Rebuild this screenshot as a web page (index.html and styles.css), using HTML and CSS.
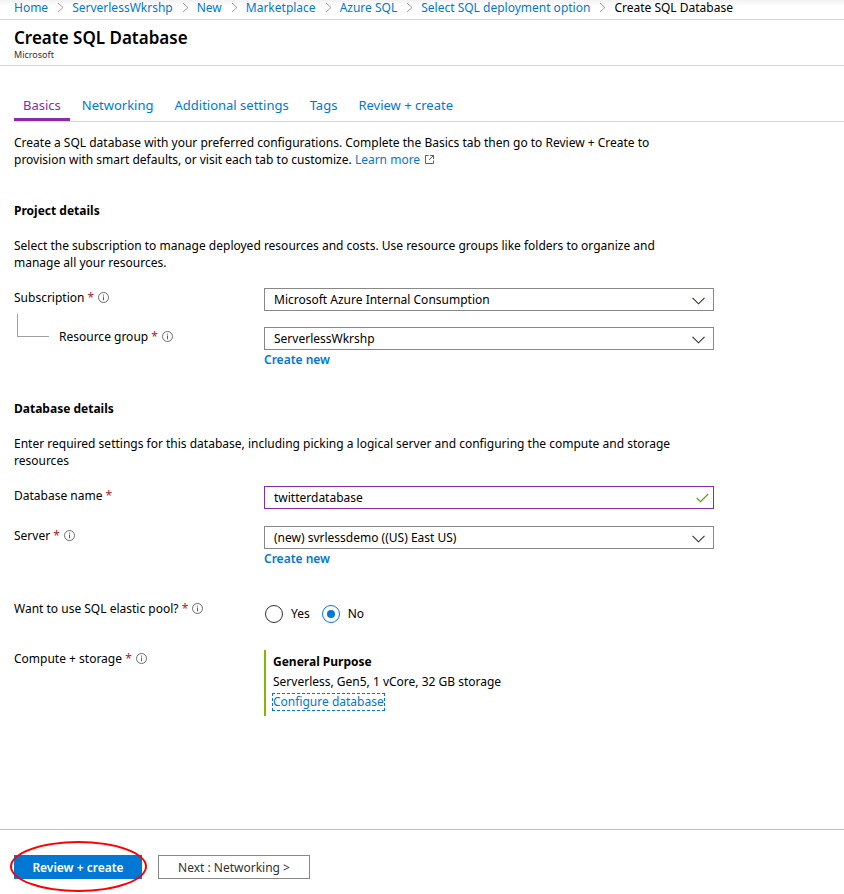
FILE: index.html
```html
<!DOCTYPE html>
<html>
<head>
<meta charset="utf-8">
<link rel="stylesheet" href="styles.css">
</head>
<body>
<div class="page">
  <nav class="crumbs">
    <a class="crumb">Home</a><span class="sep"><svg width="7" height="11" viewBox="0 0 7 11"><polyline points="1,1 6,5.5 1,10" fill="none" stroke="#a19f9d" stroke-width="1"/></svg></span>
    <a class="crumb">ServerlessWkrshp</a><span class="sep"><svg width="7" height="11" viewBox="0 0 7 11"><polyline points="1,1 6,5.5 1,10" fill="none" stroke="#a19f9d" stroke-width="1"/></svg></span>
    <a class="crumb">New</a><span class="sep"><svg width="7" height="11" viewBox="0 0 7 11"><polyline points="1,1 6,5.5 1,10" fill="none" stroke="#a19f9d" stroke-width="1"/></svg></span>
    <a class="crumb">Marketplace</a><span class="sep"><svg width="7" height="11" viewBox="0 0 7 11"><polyline points="1,1 6,5.5 1,10" fill="none" stroke="#a19f9d" stroke-width="1"/></svg></span>
    <a class="crumb">Azure SQL</a><span class="sep"><svg width="7" height="11" viewBox="0 0 7 11"><polyline points="1,1 6,5.5 1,10" fill="none" stroke="#a19f9d" stroke-width="1"/></svg></span>
    <a class="crumb">Select SQL deployment option</a><span class="sep"><svg width="7" height="11" viewBox="0 0 7 11"><polyline points="1,1 6,5.5 1,10" fill="none" stroke="#a19f9d" stroke-width="1"/></svg></span>
    <span class="crumb current">Create SQL Database</span>
  </nav>

  <header class="title-block">
    <h1 class="title">Create SQL Database</h1>
    <div class="publisher">Microsoft</div>
  </header>

  <div class="content">
    <div class="tabs">
      <div class="tab active">Basics</div>
      <div class="tab">Networking</div>
      <div class="tab">Additional settings</div>
      <div class="tab">Tags</div>
      <div class="tab">Review + create</div>
    </div>

    <p class="intro">Create a SQL database with your preferred configurations. Complete the Basics tab then go to Review + Create to provision with smart defaults, or visit each tab to customize. <a class="link">Learn more<svg class="ext" width="11" height="11" viewBox="0 0 11 11"><path d="M4.5 1.5H1.5v8h8v-3" fill="none" stroke="#605e5c" stroke-width="1"/><path d="M6 1.5h3.5V5M9.5 1.5L5 6" fill="none" stroke="#605e5c" stroke-width="1"/></svg></a></p>

    <h2 class="section">Project details</h2>
    <p class="para">Select the subscription to manage deployed resources and costs. Use resource groups like folders to organize and manage all your resources.</p>

    <div class="row row-subs">
      <div class="label">Subscription <span class="req">*</span> <svg class="info" width="11" height="11" viewBox="0 0 11 11"><circle cx="5.5" cy="5.5" r="5" fill="none" stroke="#605e5c" stroke-width="0.9"/><rect x="5" y="4.5" width="1" height="3.8" fill="#605e5c"/><rect x="5" y="2.6" width="1" height="1" fill="#605e5c"/></svg></div>
      <div class="control">
        <div class="select"><span>Microsoft Azure Internal Consumption</span><svg class="chev" width="13" height="8" viewBox="0 0 13 8"><polyline points="0.5,0.8 6.5,6.8 12.5,0.8" fill="none" stroke="#323130" stroke-width="1.1"/></svg></div>
      </div>
    </div>

    <div class="row row-sub">
      <div class="sublabel"><span class="tree"></span><span class="label">Resource group <span class="req">*</span> <svg class="info" width="11" height="11" viewBox="0 0 11 11"><circle cx="5.5" cy="5.5" r="5" fill="none" stroke="#605e5c" stroke-width="0.9"/><rect x="5" y="4.5" width="1" height="3.8" fill="#605e5c"/><rect x="5" y="2.6" width="1" height="1" fill="#605e5c"/></svg></span></div>
      <div class="control">
        <div class="select"><span>ServerlessWkrshp</span><svg class="chev" width="13" height="8" viewBox="0 0 13 8"><polyline points="0.5,0.8 6.5,6.8 12.5,0.8" fill="none" stroke="#323130" stroke-width="1.1"/></svg></div>
        <a class="create-new">Create new</a>
      </div>
    </div>

    <h2 class="section section-2">Database details</h2>
    <p class="para">Enter required settings for this database, including picking a logical server and configuring the compute and storage resources</p>

    <div class="row row-db">
      <div class="label">Database name <span class="req">*</span></div>
      <div class="control">
        <div class="select input-ok"><span>twitterdatabase</span><svg class="check" width="13" height="10" viewBox="0 0 13 10"><polyline points="0.8,5 4.5,8.7 12.2,1" fill="none" stroke="#57a300" stroke-width="1.1"/></svg></div>
      </div>
    </div>

    <div class="row row-server">
      <div class="label">Server <span class="req">*</span> <svg class="info" width="11" height="11" viewBox="0 0 11 11"><circle cx="5.5" cy="5.5" r="5" fill="none" stroke="#605e5c" stroke-width="0.9"/><rect x="5" y="4.5" width="1" height="3.8" fill="#605e5c"/><rect x="5" y="2.6" width="1" height="1" fill="#605e5c"/></svg></div>
      <div class="control">
        <div class="select"><span>(new) svrlessdemo ((US) East US)</span><svg class="chev" width="13" height="8" viewBox="0 0 13 8"><polyline points="0.5,0.8 6.5,6.8 12.5,0.8" fill="none" stroke="#323130" stroke-width="1.1"/></svg></div>
        <a class="create-new">Create new</a>
      </div>
    </div>

    <div class="row row-pool">
      <div class="label">Want to use SQL elastic pool? <span class="req">*</span> <svg class="info" width="11" height="11" viewBox="0 0 11 11"><circle cx="5.5" cy="5.5" r="5" fill="none" stroke="#605e5c" stroke-width="0.9"/><rect x="5" y="4.5" width="1" height="3.8" fill="#605e5c"/><rect x="5" y="2.6" width="1" height="1" fill="#605e5c"/></svg></div>
      <div class="control radios">
        <span class="radio"><span class="dot"></span>Yes</span>
        <span class="radio on"><span class="dot"></span>No</span>
      </div>
    </div>

    <div class="row row-compute">
      <div class="label">Compute + storage <span class="req">*</span> <svg class="info" width="11" height="11" viewBox="0 0 11 11"><circle cx="5.5" cy="5.5" r="5" fill="none" stroke="#605e5c" stroke-width="0.9"/><rect x="5" y="4.5" width="1" height="3.8" fill="#605e5c"/><rect x="5" y="2.6" width="1" height="1" fill="#605e5c"/></svg></div>
      <div class="control">
        <div class="tier">
          <div class="tier-name">General Purpose</div>
          <div class="tier-desc">Serverless, Gen5, 1 vCore, 32 GB storage</div>
          <div><a class="configure">Configure database</a></div>
        </div>
      </div>
    </div>
  </div>

  <footer class="footer">
    <div class="btn-wrap">
      <button class="btn primary">Review + create</button>
      <span class="annot"></span>
    </div>
    <button class="btn secondary">Next : Networking &gt;</button>
  </footer>
</div>
</body>
</html>
```

FILE: styles.css
```css
html, body {
  margin: 0;
  padding: 0;
  background: #fff;
}
body {
  font-family: "Segoe UI", "Noto Sans", "Open Sans", sans-serif;
  font-size: 12px;
  color: #000;
  width: 844px;
  height: 894px;
  overflow: hidden;
}
.page {
  position: relative;
  height: 894px;
}
a { color: #0078d4; text-decoration: none; }

.crumbs {
  height: 20px;
  box-sizing: border-box;
  border-bottom: 1px solid #d6d6d6;
  padding-left: 14px;
  display: flex;
  align-items: flex-start;
  font-size: 12px;
  line-height: 15px;
  white-space: nowrap;
  background: linear-gradient(#f2f2f2, #fff 6px);
}
.crumb { color: #0078d4; }
.crumb.current { color: #000; }
.sep { display: inline-flex; align-items: center; height: 15px; padding: 0 8px 0 9px; }

.title-block {
  padding: 6px 14px 0;
  height: 45px;
  box-sizing: border-box;
  border-bottom: 1px solid #d6d6d6;
  margin-top: 1px;
}
.title {
  margin: 0;
  font-size: 17px;
  font-weight: 600;
  line-height: 22px;
  color: #000;
}
.publisher {
  font-size: 9px;
  line-height: 12px;
  color: #323130;
}

.content { padding: 0 14px; }

.tabs {
  display: flex;
  gap: 3px;
  margin-top: 25px;
  margin-right: -14px;
  border-bottom: 1px solid #d6d6d6;
}
.tab {
  padding: 0 9px;
  height: 30px;
  font-size: 13px;
  color: #0078d4;
  box-sizing: border-box;
  border-bottom: 3px solid transparent;
  line-height: 28px;
}
.tab.active {
  color: #8a2da5;
  border-bottom-color: #8a2da5;
}

.intro, .para {
  margin: 12px 0 0;
  font-size: 12px;
  line-height: 17px;
  width: 680px;
}
.ext { display: inline-block; vertical-align: -1px; margin-left: 4px; }

.section {
  margin: 34px 0 0;
  font-size: 12px;
  font-weight: 700;
  line-height: 17px;
}
.section-2 { margin-top: 32px; }
.para { margin-top: 18px; }

.row {
  display: grid;
  grid-template-columns: 250px 450px;
  margin-top: 17px;
}
.row-subs { margin-top: 18px; }
.row-sub { margin-top: 17px; }
.row-db { margin-top: 18px; }
.row-server { margin-top: 18px; }
.row-pool { margin-top: 33px; }
.row-compute { margin-top: 27px; }
.label {
  font-size: 12px;
  line-height: 17px;
  color: #000;
  white-space: nowrap;
}
.req { color: #a4262c; }
.info { vertical-align: -1px; margin-left: 1px; }
.sublabel {
  display: flex;
  align-items: flex-start;
}
.tree {
  display: block;
  flex: none;
  width: 31px;
  height: 22px;
  border-left: 1px solid #a19f9d;
  border-bottom: 1px solid #a19f9d;
  margin: -14px 10px 0 3px;
}

.control { display: flex; flex-direction: column; }
.select {
  height: 23px;
  flex: none;
  border: 1px solid #8a8886;
  box-sizing: border-box;
  display: flex;
  align-items: center;
  justify-content: space-between;
  padding: 0 8px 0 9px;
  font-size: 12px;
  margin-top: -1px;
}
.chev { margin-top: 2px; }
.input-ok { border-color: #8a2da5; }
.check { margin-right: -4px; }
.create-new {
  font-weight: 600;
  font-size: 12px;
  line-height: 17px;
  margin-top: 1px;
}

.radios {
  flex-direction: row;
  align-items: center;
  gap: 11px;
  margin-top: 5px;
}
.radio {
  display: inline-flex;
  align-items: center;
  gap: 8px;
  font-size: 12px;
  line-height: 18px;
  margin-left: 1px;
}
.dot {
  width: 18px;
  height: 18px;
  border: 1px solid #323130;
  border-radius: 50%;
  box-sizing: border-box;
  position: relative;
}
.radio.on .dot { border-color: #0078d4; }
.radio.on .dot::after {
  content: "";
  position: absolute;
  left: 4px;
  top: 4px;
  width: 8px;
  height: 8px;
  border-radius: 50%;
  background: #0078d4;
}

.tier {
  border-left: 2px solid #7fba00;
  padding: 2px 0 0 7px;
  height: 66px;
  box-sizing: border-box;
  line-height: 20px;
}
.tier-name { font-weight: 700; }
.configure {
  display: inline-block;
  outline: 1px dashed #0078d4;
  line-height: 16px;
}

.footer {
  position: absolute;
  left: 0;
  right: 0;
  top: 829px;
  height: 65px;
  border-top: 1px solid #bdbdbd;
  display: flex;
  align-items: flex-start;
  gap: 16px;
  padding: 25px 14px 0;
  box-sizing: border-box;
}
.btn {
  font-family: inherit;
  font-size: 12px;
  height: 24px;
  box-sizing: border-box;
  margin: 0;
  padding: 0;
}
.btn.primary {
  width: 128px;
  background: #0078d4;
  border: 1px solid #0078d4;
  color: #fff;
  font-weight: 600;
}
.btn.secondary {
  width: 152px;
  background: #fff;
  border: 1px solid #8a8886;
  color: #323130;
}
.btn-wrap { position: relative; display: flex; }
.annot {
  position: absolute;
  left: -4px;
  top: -14px;
  width: 137px;
  height: 51px;
  border: 2px solid #f00;
  border-radius: 50%;
  box-sizing: border-box;
  pointer-events: none;
}
```
